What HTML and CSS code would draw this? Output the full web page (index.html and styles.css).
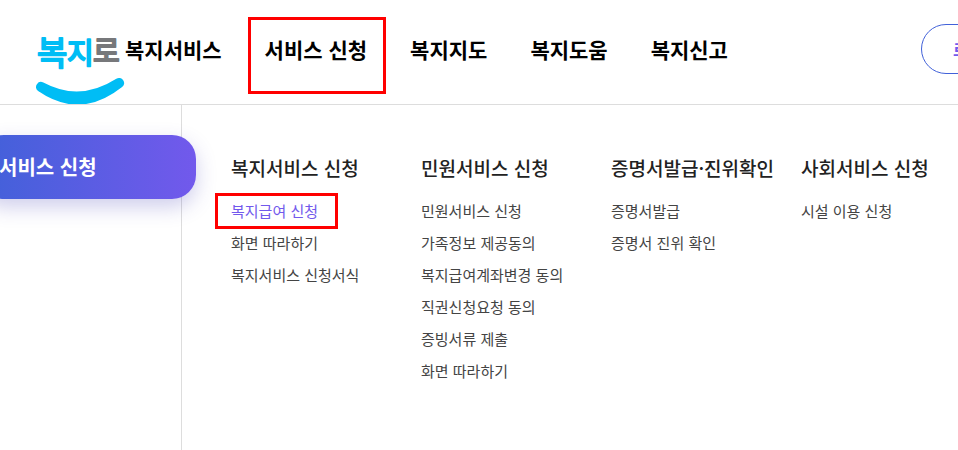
FILE: index.html
```html
<!DOCTYPE html>
<html lang="ko">

<head>
    <meta charset="UTF-8">
    <meta name="viewport" content="width=device-width, initial-scale=1.0">
    <title>복지로</title>
    <link rel="stylesheet" href="styles.css">
</head>

<body>
    <header class="header">
        <a class="logo" href="#">
            <svg viewBox="0 0 90 84" role="img" aria-label="복지로">
                <text class="logo-blue logo-large" x="2" y="45">복</text>
                <text class="logo-blue" x="32" y="44">지</text>
                <text class="logo-gray" x="58" y="42">로</text>
                <path class="logo-smile" d="M6 67 Q45 88 84 63 Q45 94 6 67 Z" />
            </svg>
        </a>
        <nav class="main-nav">
            <a href="#">복지서비스</a>
            <a class="marked" href="#">서비스 신청</a>
            <a href="#">복지지도</a>
            <a href="#">복지도움</a>
            <a href="#">복지신고</a>
        </nav>
        <button class="login" type="button">로그인</button>
    </header>

    <main class="mega-menu">
        <aside class="side">
            <h2 class="side-title">서비스 신청</h2>
        </aside>
        <div class="columns">
            <section class="column">
                <h3>복지서비스 신청</h3>
                <ul>
                    <li><a class="marked active" href="#">복지급여 신청</a></li>
                    <li><a href="#">화면 따라하기</a></li>
                    <li><a href="#">복지서비스 신청서식</a></li>
                </ul>
            </section>
            <section class="column">
                <h3>민원서비스 신청</h3>
                <ul>
                    <li><a href="#">민원서비스 신청</a></li>
                    <li><a href="#">가족정보 제공동의</a></li>
                    <li><a href="#">복지급여계좌변경 동의</a></li>
                    <li><a href="#">직권신청요청 동의</a></li>
                    <li><a href="#">증빙서류 제출</a></li>
                    <li><a href="#">화면 따라하기</a></li>
                </ul>
            </section>
            <section class="column">
                <h3>증명서발급·진위확인</h3>
                <ul>
                    <li><a href="#">증명서발급</a></li>
                    <li><a href="#">증명서 진위 확인</a></li>
                </ul>
            </section>
            <section class="column">
                <h3>사회서비스 신청</h3>
                <ul>
                    <li><a href="#">시설 이용 신청</a></li>
                </ul>
            </section>
        </div>
    </main>
</body>

</html>
```
FILE: styles.css
```css
* {
    box-sizing: border-box;
}

body {
    display: flex;
    flex-direction: column;
    min-height: 100vh;
    margin: 0;
    overflow: hidden;
    background-color: #fff;
    color: #222;
    font-family: "Noto Sans CJK KR", sans-serif;
}

a {
    color: inherit;
    text-decoration: none;
}

/* Header */
.header {
    display: flex;
    align-items: center;
    padding: 20px 0 0 35px;
    border-bottom: 1px solid #ddd;
}

.logo {
    flex: none;
    width: 90px;
}

.logo svg {
    display: block;
    width: 100%;
}

.logo text {
    font-size: 29px;
    font-weight: 400;
    stroke-width: 2;
    stroke-linecap: round;
    stroke-linejoin: round;
}

.logo .logo-large {
    font-size: 33px;
}

.logo-blue {
    fill: #00bdf5;
    stroke: #00bdf5;
}

.logo-gray {
    fill: #77787b;
    stroke: #77787b;
}

.logo-smile {
    fill: #00bdf5;
    stroke: #00bdf5;
    stroke-width: 10;
    stroke-linecap: round;
    stroke-linejoin: round;
}

.main-nav {
    display: flex;
    flex: none;
    gap: 43px;
    padding-bottom: 26px;
    color: #000;
    font-size: 21px;
    font-weight: 700;
    line-height: 32px;
}

.login {
    flex: none;
    width: 120px;
    height: 50px;
    margin: 0 0 26px 193px;
    padding: 0 0 0 31px;
    border: 1px solid #4161d9;
    border-radius: 25px;
    background-color: #fff;
    color: #7259ec;
    font-family: inherit;
    font-size: 16px;
    font-weight: 700;
    text-align: left;
}

/* Red frame over a menu entry */
.marked {
    position: relative;
}

.marked::after {
    content: "";
    position: absolute;
    inset: -7px -20px -8px -16px;
    border: 3px solid #f00;
}

.main-nav .marked::after {
    inset: -16px -19px -29px -17px;
}

/* Opened menu */
.mega-menu {
    display: flex;
    flex: 1;
}

.side {
    flex: none;
    width: 182px;
    padding-top: 30px;
    border-right: 1px solid #ddd;
}

.side-title {
    margin: 0 -15px 0 -20px;
    padding: 16px 19px;
    border-radius: 24px;
    background: linear-gradient(90deg, #4161d9, #7259ec);
    box-shadow: 0 8px 20px rgba(65, 60, 180, 0.25);
    color: #fff;
    font-size: 20px;
    font-weight: 700;
    line-height: 32px;
}

.columns {
    display: grid;
    grid-template-columns: repeat(4, minmax(190px, 1fr));
    flex: 1;
    padding: 48px 0 0 49px;
}

.column h3 {
    margin: 0;
    padding-bottom: 12px;
    font-size: 19px;
    font-weight: 500;
    line-height: 30px;
    white-space: nowrap;
}

.column ul {
    margin: 0;
    padding: 0;
    list-style: none;
}

.column li {
    color: #444;
    font-size: 15px;
    line-height: 32px;
    white-space: nowrap;
}

.column .active {
    color: #7259ec;
}
```
